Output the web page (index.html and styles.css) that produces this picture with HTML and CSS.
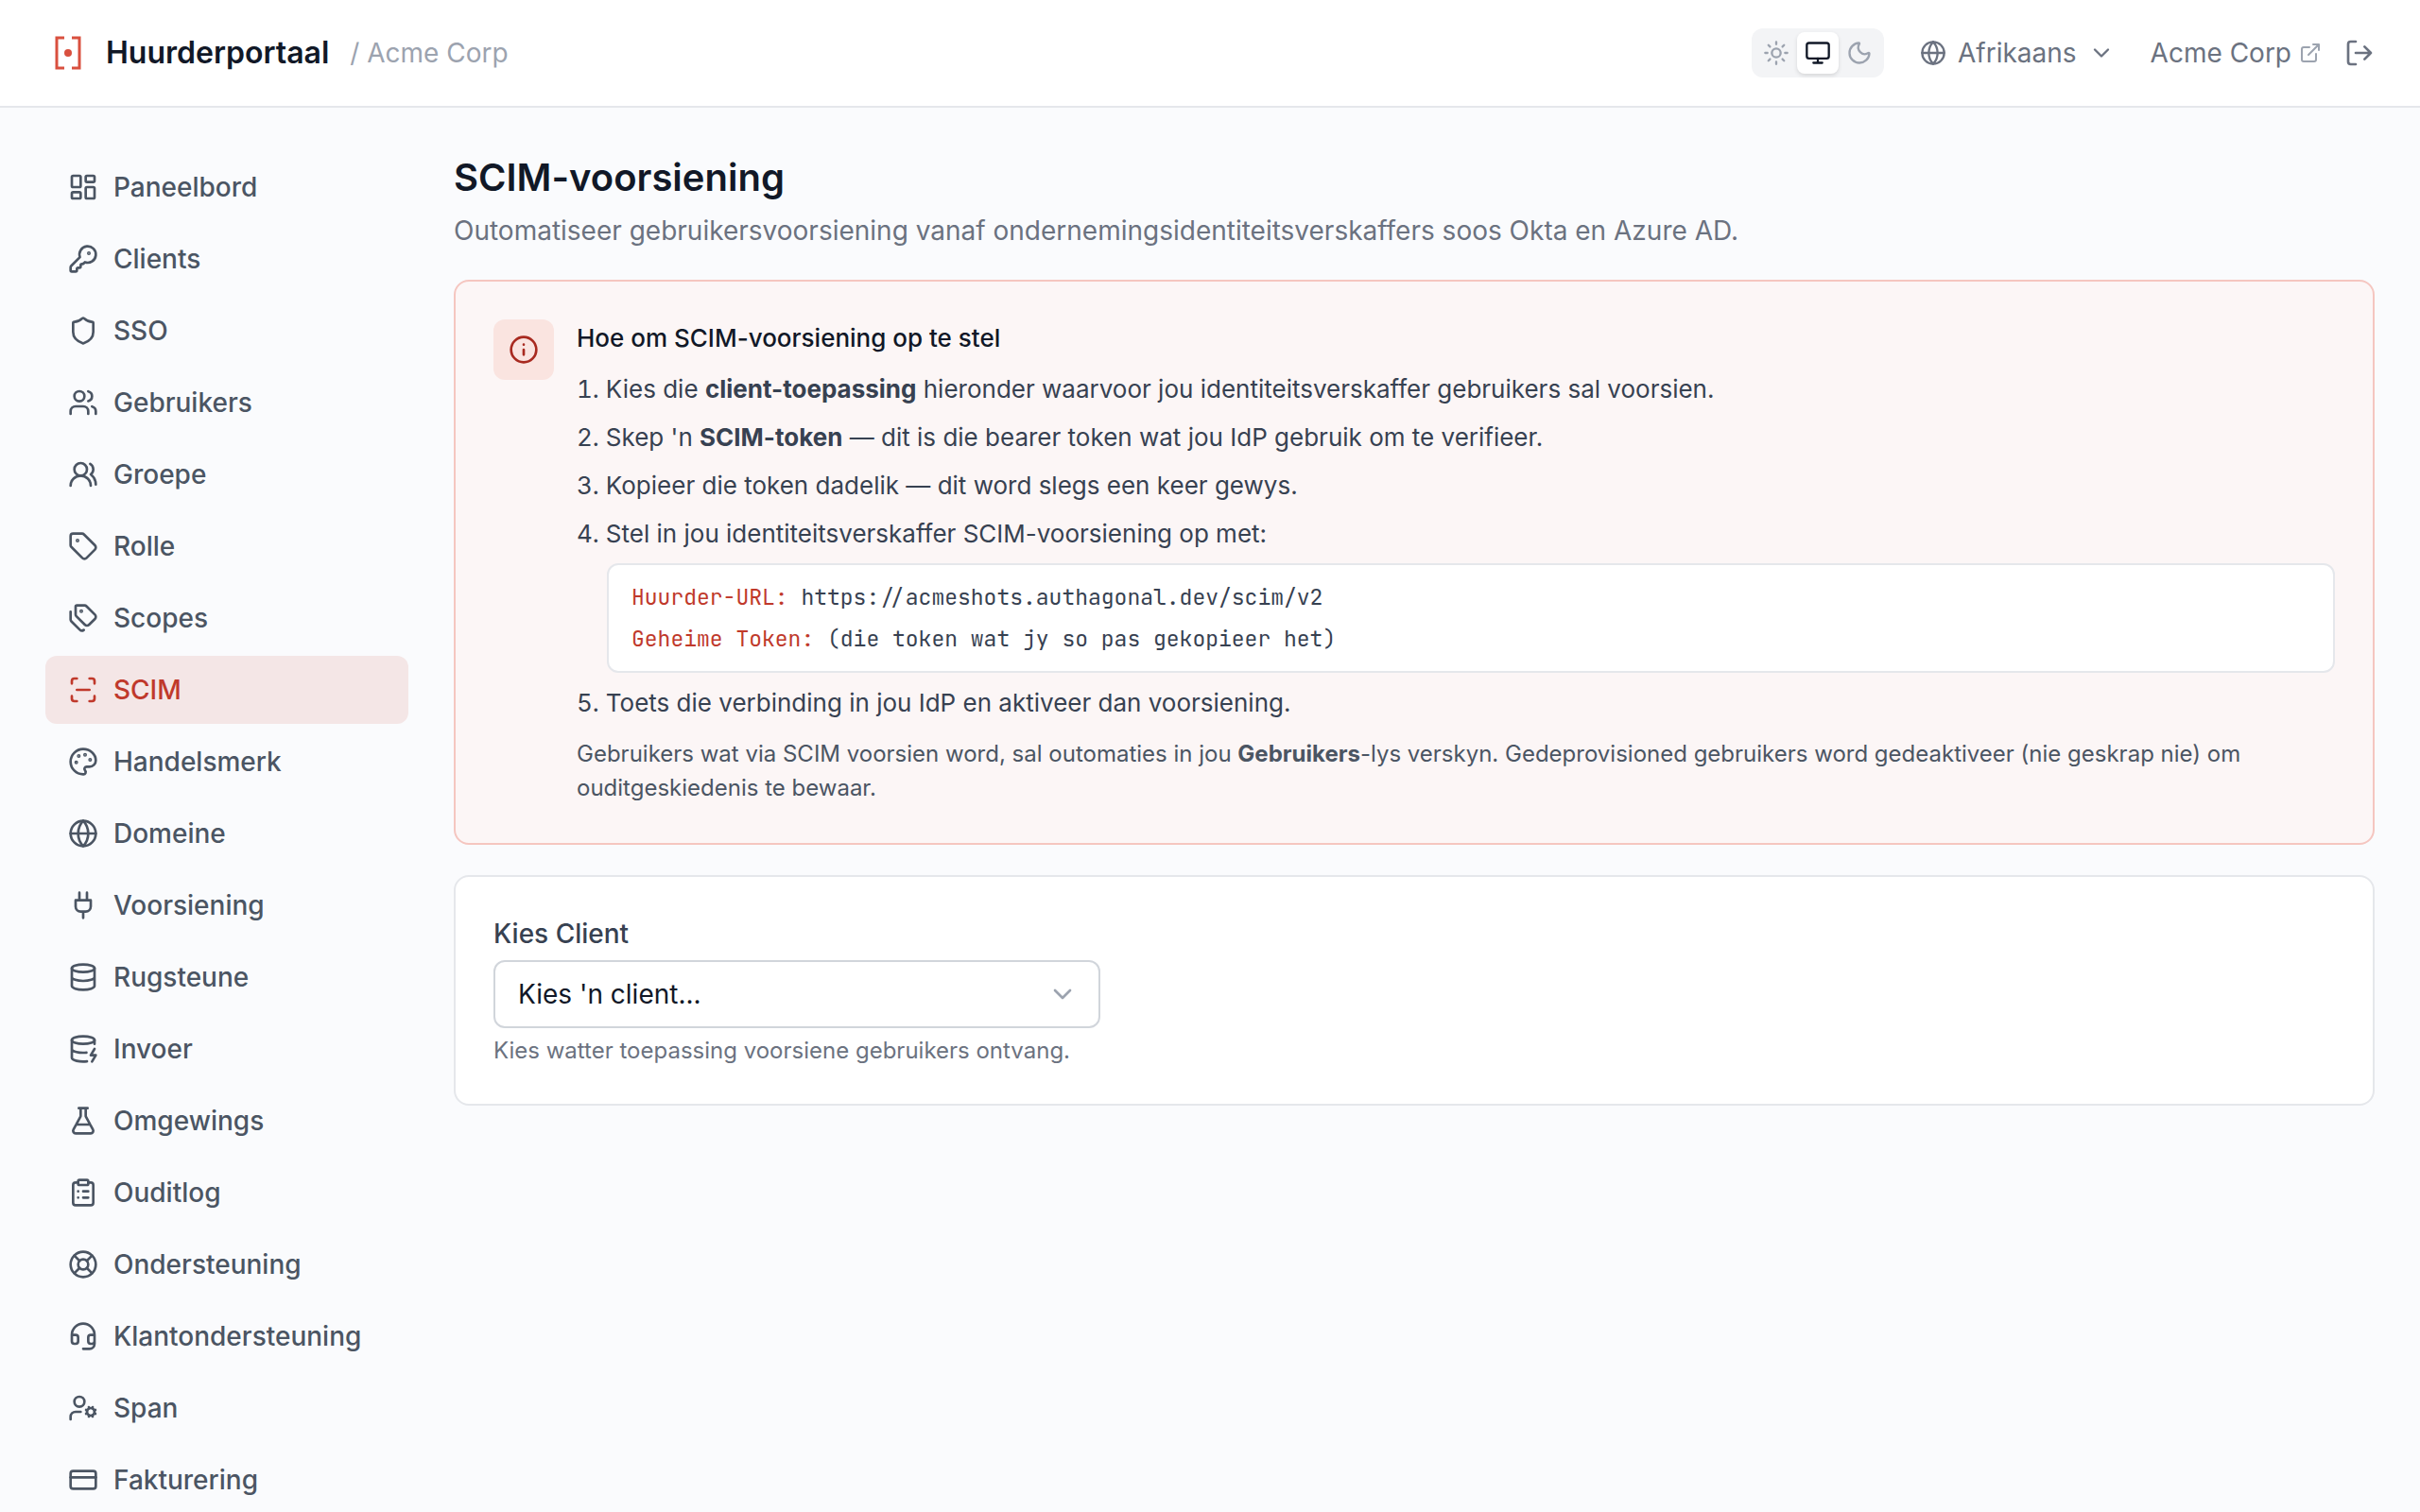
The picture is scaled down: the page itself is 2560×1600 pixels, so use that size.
FILE: index.html
```html
<!DOCTYPE html>
<html lang="af">
<head>
    <meta charset="UTF-8">
    <meta name="viewport" content="width=device-width, initial-scale=1.0">
    <title>SCIM-voorsiening - Huurderportaal</title>
    <link rel="stylesheet" href="styles.css">
</head>
<body>
    <header class="topbar">
        <div class="brand">
            <svg class="logo" viewBox="0 0 48 48" aria-hidden="true">
                <path d="M20 8h-8v32h8M28 8h8v32h-8"/>
                <circle cx="24" cy="24" r="4"/>
            </svg>
            <span class="brand-name">Huurderportaal</span>
            <span class="brand-tenant">/ Acme Corp</span>
        </div>
        <div class="topbar-actions">
            <div class="theme-switch">
                <button type="button" aria-label="Lig">
                    <svg class="icon icon-sm" viewBox="0 0 24 24"><circle cx="12" cy="12" r="4"/><path d="M12 2v2M12 20v2M4.93 4.93l1.41 1.41M17.66 17.66l1.41 1.41M2 12h2M20 12h2M6.34 17.66l-1.41 1.41M19.07 4.93l-1.41 1.41"/></svg>
                </button>
                <button type="button" class="active" aria-label="Stelsel">
                    <svg class="icon icon-sm" viewBox="0 0 24 24"><rect x="2" y="3" width="20" height="14" rx="2"/><path d="M8 21h8M12 17v4"/></svg>
                </button>
                <button type="button" aria-label="Donker">
                    <svg class="icon icon-sm" viewBox="0 0 24 24"><path d="M20.985 12.486a9 9 0 1 1-9.473-9.472c.405-.022.617.46.402.803a6 6 0 0 0 8.268 8.268c.344-.215.825-.004.803.401"/></svg>
                </button>
            </div>
            <button type="button" class="language">
                <svg class="icon icon-sm" viewBox="0 0 24 24"><circle cx="12" cy="12" r="10"/><path d="M12 2a14.5 14.5 0 0 0 0 20 14.5 14.5 0 0 0 0-20M2 12h20"/></svg>
                Afrikaans
                <svg class="icon icon-sm" viewBox="0 0 24 24"><path d="m6 9 6 6 6-6"/></svg>
            </button>
            <a class="tenant-link" href="#">
                Acme Corp
                <svg class="icon icon-xs" viewBox="0 0 24 24"><path d="M15 3h6v6M10 14 21 3M18 13v6a2 2 0 0 1-2 2H5a2 2 0 0 1-2-2V8a2 2 0 0 1 2-2h6"/></svg>
            </a>
            <button type="button" class="logout" aria-label="Teken uit">
                <svg class="icon" viewBox="0 0 24 24"><path d="m16 17 5-5-5-5M21 12H9M9 21H5a2 2 0 0 1-2-2V5a2 2 0 0 1 2-2h4"/></svg>
            </button>
        </div>
    </header>

    <div class="layout">
        <nav class="sidebar">
            <a href="#">
                <svg class="icon" viewBox="0 0 24 24"><rect x="3" y="3" width="7" height="9" rx="1"/><rect x="14" y="3" width="7" height="5" rx="1"/><rect x="14" y="12" width="7" height="9" rx="1"/><rect x="3" y="16" width="7" height="5" rx="1"/></svg>
                Paneelbord
            </a>
            <a href="#">
                <svg class="icon" viewBox="0 0 24 24"><path d="M2.586 17.414A2 2 0 0 0 2 18.828V21a1 1 0 0 0 1 1h3a1 1 0 0 0 1-1v-1a1 1 0 0 1 1-1h1a1 1 0 0 0 1-1v-1a1 1 0 0 1 1-1h.172a2 2 0 0 0 1.414-.586l.814-.814a6.5 6.5 0 1 0-4-4z"/><circle class="dot" cx="16.5" cy="7.5" r=".5"/></svg>
                Clients
            </a>
            <a href="#">
                <svg class="icon" viewBox="0 0 24 24"><path d="M20 13c0 5-3.5 7.5-7.66 8.95a1 1 0 0 1-.67-.01C7.5 20.5 4 18 4 13V6a1 1 0 0 1 1-1c2 0 4.5-1.2 6.24-2.72a1.17 1.17 0 0 1 1.52 0C14.51 3.81 17 5 19 5a1 1 0 0 1 1 1z"/></svg>
                SSO
            </a>
            <a href="#">
                <svg class="icon" viewBox="0 0 24 24"><path d="M16 21v-2a4 4 0 0 0-4-4H6a4 4 0 0 0-4 4v2"/><circle cx="9" cy="7" r="4"/><path d="M22 21v-2a4 4 0 0 0-3-3.87M16 3.13a4 4 0 0 1 0 7.75"/></svg>
                Gebruikers
            </a>
            <a href="#">
                <svg class="icon" viewBox="0 0 24 24"><path d="M18 21a8 8 0 0 0-16 0"/><circle cx="10" cy="8" r="5"/><path d="M22 20c0-3.37-2-6.5-4-8a5 5 0 0 0-.45-8.3"/></svg>
                Groepe
            </a>
            <a href="#">
                <svg class="icon" viewBox="0 0 24 24"><path d="M12.586 2.586A2 2 0 0 0 11.172 2H4a2 2 0 0 0-2 2v7.172a2 2 0 0 0 .586 1.414l8.704 8.704a2.426 2.426 0 0 0 3.42 0l6.58-6.58a2.426 2.426 0 0 0 0-3.42z"/><circle class="dot" cx="7.5" cy="7.5" r=".5"/></svg>
                Rolle
            </a>
            <a href="#">
                <svg class="icon" viewBox="0 0 24 24"><path d="M13.172 2a2 2 0 0 1 1.414.586l6.71 6.71a2.4 2.4 0 0 1 0 3.408l-4.592 4.592a2.4 2.4 0 0 1-3.408 0l-6.71-6.71A2 2 0 0 1 6 9.172V3a1 1 0 0 1 1-1zM2 7v6.172a2 2 0 0 0 .586 1.414l6.71 6.71a2.4 2.4 0 0 0 3.191.193"/><circle class="dot" cx="10.5" cy="6.5" r=".5"/></svg>
                Scopes
            </a>
            <a href="#" class="active" aria-current="page">
                <svg class="icon" viewBox="0 0 24 24"><path d="M3 7V5a2 2 0 0 1 2-2h2M17 3h2a2 2 0 0 1 2 2v2M21 17v2a2 2 0 0 1-2 2h-2M7 21H5a2 2 0 0 1-2-2v-2M7 12h10"/></svg>
                SCIM
            </a>
            <a href="#">
                <svg class="icon" viewBox="0 0 24 24"><path d="M12 22a1 1 0 0 1 0-20 10 9 0 0 1 10 9 5 5 0 0 1-5 5h-2.25a1.75 1.75 0 0 0-1.4 2.8l.3.4a1.75 1.75 0 0 1-1.4 2.8z"/><circle class="dot" cx="13.5" cy="6.5" r=".5"/><circle class="dot" cx="17.5" cy="10.5" r=".5"/><circle class="dot" cx="6.5" cy="12.5" r=".5"/><circle class="dot" cx="8.5" cy="7.5" r=".5"/></svg>
                Handelsmerk
            </a>
            <a href="#">
                <svg class="icon" viewBox="0 0 24 24"><circle cx="12" cy="12" r="10"/><path d="M12 2a14.5 14.5 0 0 0 0 20 14.5 14.5 0 0 0 0-20M2 12h20"/></svg>
                Domeine
            </a>
            <a href="#">
                <svg class="icon" viewBox="0 0 24 24"><path d="M12 22v-5M9 8V2M15 8V2M18 8v5a4 4 0 0 1-4 4h-4a4 4 0 0 1-4-4V8Z"/></svg>
                Voorsiening
            </a>
            <a href="#">
                <svg class="icon" viewBox="0 0 24 24"><ellipse cx="12" cy="5" rx="9" ry="3"/><path d="M3 5v14a9 3 0 0 0 18 0V5M3 12a9 3 0 0 0 18 0"/></svg>
                Rugsteune
            </a>
            <a href="#">
                <svg class="icon" viewBox="0 0 24 24"><ellipse cx="12" cy="5" rx="9" ry="3"/><path d="M3 5v14a9 3 0 0 0 12 2.84M21 5v3M21 12l-3 5h4l-3 5M3 12a9 3 0 0 0 11.59 2.87"/></svg>
                Invoer
            </a>
            <a href="#">
                <svg class="icon" viewBox="0 0 24 24"><path d="M14 2v6a2 2 0 0 0 .245.96l5.51 10.08A2 2 0 0 1 18 22H6a2 2 0 0 1-1.755-2.96l5.51-10.08A2 2 0 0 0 10 8V2M6.453 15h11.094M8.5 2h7"/></svg>
                Omgewings
            </a>
            <a href="#">
                <svg class="icon" viewBox="0 0 24 24"><rect x="8" y="2" width="8" height="4" rx="1"/><path d="M16 4h2a2 2 0 0 1 2 2v14a2 2 0 0 1-2 2H6a2 2 0 0 1-2-2V6a2 2 0 0 1 2-2h2M12 11h4M12 16h4M8 11h.01M8 16h.01"/></svg>
                Ouditlog
            </a>
            <a href="#">
                <svg class="icon" viewBox="0 0 24 24"><circle cx="12" cy="12" r="10"/><path d="m4.93 4.93 4.24 4.24M14.83 9.17l4.24-4.24M14.83 14.83l4.24 4.24M9.17 14.83l-4.24 4.24"/><circle cx="12" cy="12" r="4"/></svg>
                Ondersteuning
            </a>
            <a href="#">
                <svg class="icon" viewBox="0 0 24 24"><path d="M3 11h3a2 2 0 0 1 2 2v3a2 2 0 0 1-2 2H5a2 2 0 0 1-2-2v-5Zm0 0a9 9 0 1 1 18 0m0 0v5a2 2 0 0 1-2 2h-1a2 2 0 0 1-2-2v-3a2 2 0 0 1 2-2h3ZM21 16v2a4 4 0 0 1-4 4h-5"/></svg>
                Klantondersteuning
            </a>
            <a href="#">
                <svg class="icon" viewBox="0 0 24 24"><circle cx="9" cy="7" r="4"/><path d="M10 15H6a4 4 0 0 0-4 4v2"/><circle cx="18" cy="15" r="3"/><path d="m14.305 16.53.923-.382M15.228 13.852l-.923-.383M16.852 12.228l-.383-.923M16.852 17.772l-.383.924M19.148 12.228l.383-.923M19.53 18.696l-.382-.924M20.772 13.852l.924-.383M20.772 16.148l.924.383"/></svg>
                Span
            </a>
            <a href="#">
                <svg class="icon" viewBox="0 0 24 24"><rect x="2" y="5" width="20" height="14" rx="2"/><path d="M2 10h20"/></svg>
                Fakturering
            </a>
        </nav>

        <main class="content">
            <div class="page-head">
                <h1>SCIM-voorsiening</h1>
                <p>Outomatiseer gebruikersvoorsiening vanaf ondernemingsidentiteitsverskaffers soos Okta en Azure AD.</p>
            </div>

            <section class="card guide">
                <div class="guide-icon">
                    <svg class="icon" viewBox="0 0 24 24"><circle cx="12" cy="12" r="10"/><path d="M12 16v-4M12 8h.01"/></svg>
                </div>
                <div class="guide-body">
                    <h2>Hoe om SCIM-voorsiening op te stel</h2>
                    <ol>
                        <li>Kies die <strong>client-toepassing</strong> hieronder waarvoor jou identiteitsverskaffer gebruikers sal voorsien.</li>
                        <li>Skep 'n <strong>SCIM-token</strong> — dit is die bearer token wat jou IdP gebruik om te verifieer.</li>
                        <li>Kopieer die token dadelik — dit word slegs een keer gewys.</li>
                        <li>Stel in jou identiteitsverskaffer SCIM-voorsiening op met:
                            <div class="endpoint">
                                <div><span class="key">Huurder-URL:</span> https://acmeshots.authagonal.dev/scim/v2</div>
                                <div><span class="key">Geheime Token:</span> (die token wat jy so pas gekopieer het)</div>
                            </div>
                        </li>
                        <li>Toets die verbinding in jou IdP en aktiveer dan voorsiening.</li>
                    </ol>
                    <p class="note">Gebruikers wat via SCIM voorsien word, sal outomaties in jou <strong>Gebruikers</strong>-lys verskyn. Gedeprovisioned gebruikers word gedeaktiveer (nie geskrap nie) om ouditgeskiedenis te bewaar.</p>
                </div>
            </section>

            <section class="card">
                <label for="client">Kies Client</label>
                <div class="select">
                    <select id="client">
                        <option>Kies 'n client...</option>
                    </select>
                    <svg class="icon" viewBox="0 0 24 24"><path d="m6 9 6 6 6-6"/></svg>
                </div>
                <p class="hint">Kies watter toepassing voorsiene gebruikers ontvang.</p>
            </section>
        </main>
    </div>
</body>
</html>
```
FILE: styles.css
```css
:root {
    --primary: #c0392b;
    --primary-dark: #a82a20;
    --primary-border: #f5c6c0;
    --background: #fafbfd;
    --surface: #ffffff;
    --heading: #111827;
    --text: #374151;
    --text-soft: #4b5563;
    --muted: #6b7280;
    --faint: #9ca3af;
    --border: #e5e7eb;
    --radius: 12px;
}

* {
    box-sizing: border-box;
}

body {
    margin: 0;
    font-family: Inter, sans-serif;
    font-size: 28px;
    line-height: 40px;
    background: var(--background);
    color: var(--text);
}

h1, h2, p, ol {
    margin: 0;
}

a {
    color: inherit;
    text-decoration: none;
}

button {
    display: flex;
    align-items: center;
    padding: 0;
    border: none;
    background: none;
    color: inherit;
    font: inherit;
    cursor: pointer;
}

.icon {
    flex-shrink: 0;
    width: 32px;
    height: 32px;
    fill: none;
    stroke: currentColor;
    stroke-width: 2;
    stroke-linecap: round;
    stroke-linejoin: round;
}

.icon-sm {
    width: 28px;
    height: 28px;
}

.icon-xs {
    width: 24px;
    height: 24px;
    color: var(--faint);
}

.icon .dot {
    fill: currentColor;
}

/* top bar */
.topbar {
    display: flex;
    align-items: center;
    justify-content: space-between;
    height: 114px;
    padding: 0 48px;
    background: var(--surface);
    border-bottom: 2px solid var(--border);
}

.brand {
    display: flex;
    align-items: center;
}

.logo {
    width: 48px;
    height: 48px;
    margin-right: 16px;
    fill: none;
    stroke: #d9503f;
    stroke-width: 3;
}

.logo circle {
    fill: #d9503f;
    stroke: none;
}

.brand-name {
    margin-right: 22px;
    color: var(--heading);
    font-size: 32px;
    font-weight: 600;
}

.brand-tenant {
    color: var(--faint);
}

.topbar-actions {
    display: flex;
    align-items: center;
    gap: 24px;
    color: var(--muted);
}

.theme-switch {
    display: flex;
    padding: 4px;
    border-radius: var(--radius);
    background: #f3f4f6;
    color: var(--faint);
}

.theme-switch button {
    justify-content: center;
    width: 44px;
    height: 44px;
    border-radius: 8px;
}

.theme-switch .active {
    background: var(--surface);
    color: var(--heading);
    box-shadow: 0 2px 4px rgba(0, 0, 0, 0.12);
}

.language {
    gap: 12px;
    padding: 0 14px;
}

.tenant-link {
    display: flex;
    align-items: center;
    gap: 8px;
}

/* page */
.layout {
    display: flex;
    gap: 48px;
    padding: 48px;
}

.sidebar {
    display: flex;
    flex-direction: column;
    flex-shrink: 0;
    gap: 4px;
    width: 384px;
    color: var(--text-soft);
    font-weight: 500;
}

.sidebar a {
    display: flex;
    align-items: center;
    gap: 16px;
    padding: 16px 24px;
    border-radius: var(--radius);
}

.sidebar .active {
    background: #f4e6e6;
    color: var(--primary);
}

.content {
    display: flex;
    flex: 1;
    flex-direction: column;
    gap: 32px;
    min-width: 0;
}

h1 {
    margin-bottom: 10px;
    color: var(--heading);
    font-size: 40px;
    font-weight: 600;
    line-height: 52px;
}

.page-head p {
    color: var(--muted);
}

.card {
    padding: 40px;
    border: 2px solid var(--border);
    border-radius: 16px;
    background: var(--surface);
}

.guide {
    display: flex;
    gap: 24px;
    border-color: var(--primary-border);
    background: #fcf6f6;
}

.guide-icon {
    display: flex;
    align-items: center;
    justify-content: center;
    flex-shrink: 0;
    width: 64px;
    height: 64px;
    border-radius: var(--radius);
    background: #fae4e0;
    color: var(--primary-dark);
}

.guide-body {
    flex: 1;
    font-size: 26px;
}

h2 {
    margin-bottom: 14px;
    color: var(--heading);
    font-size: 26px;
    font-weight: 500;
}

ol {
    display: grid;
    gap: 12px;
    padding: 0;
    line-height: 39px;
    list-style-position: inside;
}

.endpoint {
    margin: 12px 0 0 32px;
    padding: 12px 24px;
    border: 2px solid var(--border);
    border-radius: var(--radius);
    background: var(--surface);
    font-family: "JetBrains Mono", "DejaVu Sans Mono", monospace;
    font-size: 23px;
    line-height: 44px;
}

.key {
    color: var(--primary);
}

.note {
    margin-top: 17px;
    color: var(--text-soft);
    font-size: 24px;
    line-height: 36px;
}

label {
    display: block;
    margin-bottom: 8px;
    font-weight: 500;
}

.select {
    position: relative;
    max-width: 642px;
    color: var(--faint);
}

.select select {
    appearance: none;
    display: block;
    width: 100%;
    height: 72px;
    padding: 0 72px 0 24px;
    border: 2px solid #d1d5db;
    border-radius: var(--radius);
    background: var(--surface);
    color: var(--heading);
    font: inherit;
}

/* chevron drawn over the native select */
.select .icon {
    position: absolute;
    top: 20px;
    right: 24px;
    pointer-events: none;
}

.hint {
    margin-top: 8px;
    color: var(--muted);
    font-size: 24px;
    line-height: 32px;
}
```
